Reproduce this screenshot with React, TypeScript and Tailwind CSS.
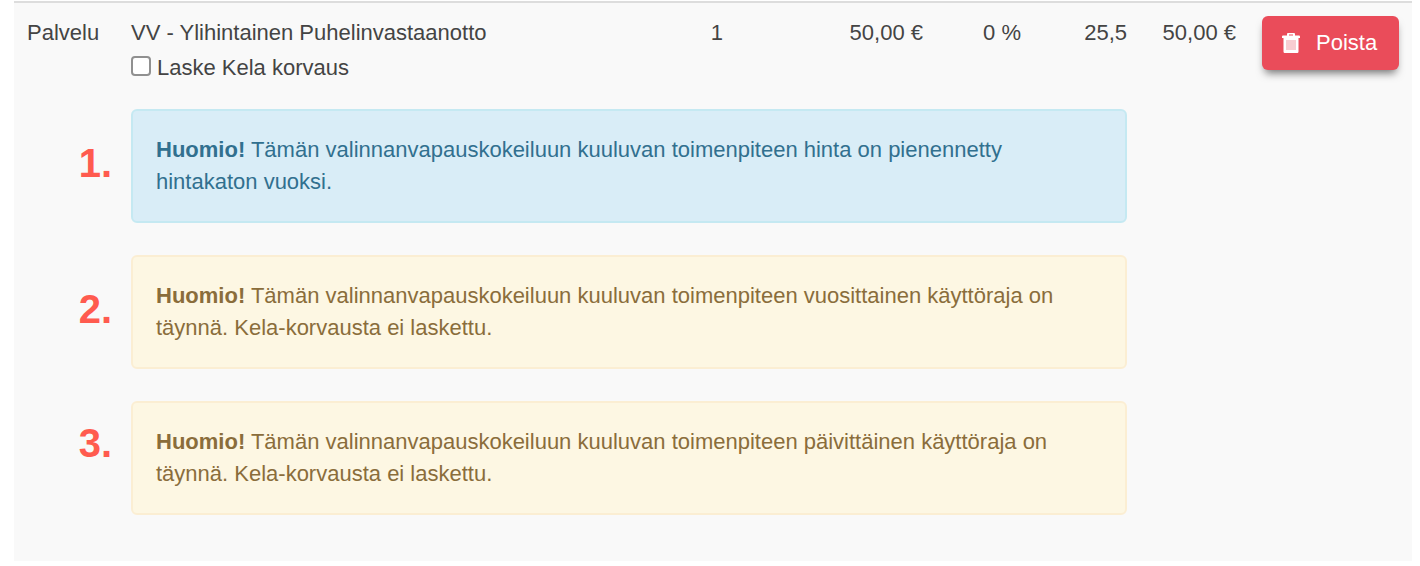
import clsx from 'clsx';

type Notice = {
    number: string;
    tone: 'info' | 'warning';
    text: string;
    raised?: boolean;
};

const notices: Notice[] = [
    {
        number: '1.',
        tone: 'info',
        text: 'Tämän valinnanvapauskokeiluun kuuluvan toimenpiteen hinta on pienennetty hintakaton vuoksi.',
    },
    {
        number: '2.',
        tone: 'warning',
        text: 'Tämän valinnanvapauskokeiluun kuuluvan toimenpiteen vuosittainen käyttöraja on täynnä. Kela-korvausta ei laskettu.',
    },
    {
        number: '3.',
        tone: 'warning',
        text: 'Tämän valinnanvapauskokeiluun kuuluvan toimenpiteen päivittäinen käyttöraja on täynnä. Kela-korvausta ei laskettu.',
        raised: true,
    },
];

function TrashIcon() {
    return (
        <svg viewBox="0 0 18 20" className="h-5 w-[18px]" aria-hidden="true">
            <path
                d="M5 2.5V1.2C5 .5 5.5 0 6.2 0h5.6c.7 0 1.2.5 1.2 1.2v1.3h3.8c.6 0 1.2.5 1.2 1.1V5H0V3.6c0-.6.6-1.1 1.2-1.1zm2 0h4V1.6H7z"
                fill="#fff"
            />
            <path d="M1.5 5h15v13.4c0 .9-.7 1.6-1.6 1.6H3.1c-.9 0-1.6-.7-1.6-1.6z" fill="#fff" />
            <path d="M4 7h10v10H4z" fill="#f8cdd1" />
        </svg>
    );
}

function Alert({ tone, text }: Pick<Notice, 'tone' | 'text'>) {
    return (
        <div
            role="alert"
            className={clsx(
                'rounded-md border-2 p-[23px]',
                tone === 'info'
                    ? 'border-[#c5e9f2] bg-[#d9edf7] text-[#31708f]'
                    : 'border-[#fbeed3] bg-[#fdf7e3] text-[#8a6d3b]',
            )}
        >
            <strong>Huomio!</strong> {text}
        </div>
    );
}

export default function App() {
    return (
        <main className="bg-white pt-px pr-2 pl-[14px] font-['Liberation_Sans',Arial,sans-serif] text-[22px] leading-8 text-[#444]">
            <table className="w-full table-fixed border-collapse border-t-2 border-[#ddd] bg-[#f9f9f9]">
                <colgroup>
                    <col className="w-[104px]" />
                    <col />
                    <col className="w-[100px]" />
                    <col className="w-[200px]" />
                    <col className="w-[98px]" />
                    <col className="w-[106px]" />
                    <col className="w-[109px]" />
                    <col className="w-[163px]" />
                </colgroup>
                <tbody className="align-top">
                    <tr>
                        <td className="px-[13px] pt-[14px]">Palvelu</td>
                        <td className="px-[13px] pt-[14px] pb-[25px]">
                            <div>VV - Ylihintainen Puhelinvastaanotto</div>
                            <label className="mt-[3px] flex items-center gap-[6px]">
                                <input
                                    type="checkbox"
                                    className="mb-1 size-5 appearance-none rounded-[4px] border-2 border-[#909090] bg-white checked:bg-[#0075ff]"
                                />
                                Laske Kela korvaus
                            </label>
                        </td>
                        <td className="px-[13px] pt-[14px] text-right">1</td>
                        <td className="px-[13px] pt-[14px] text-right">50,00 €</td>
                        <td className="px-[13px] pt-[14px] text-right">0 %</td>
                        <td className="px-[13px] pt-[14px] text-right">25,5</td>
                        <td className="px-[13px] pt-[14px] text-right">50,00 €</td>
                        <td className="px-[13px] pt-[13px]">
                            <button
                                type="button"
                                className="flex h-[54px] w-full items-center gap-4 rounded-md bg-[#ea4c5a] pl-5 text-white shadow-[0_6px_8px_-3px_rgba(0,0,0,0.55)]"
                            >
                                <TrashIcon />
                                Poista
                            </button>
                        </td>
                    </tr>
                    {notices.map((notice) => (
                        <tr key={notice.number}>
                            <td
                                className={clsx(
                                    'pr-[6px] text-right text-[40px] leading-[45px] font-bold text-[#ff5b4f]',
                                    notice.raised ? 'pt-5' : 'pt-8',
                                )}
                            >
                                {notice.number}
                            </td>
                            <td colSpan={5} className="px-[13px] pb-8">
                                <Alert tone={notice.tone} text={notice.text} />
                            </td>
                        </tr>
                    ))}
                </tbody>
                <tfoot>
                    <tr>
                        <td colSpan={8} className="h-[14px]" />
                    </tr>
                </tfoot>
            </table>
        </main>
    );
}
